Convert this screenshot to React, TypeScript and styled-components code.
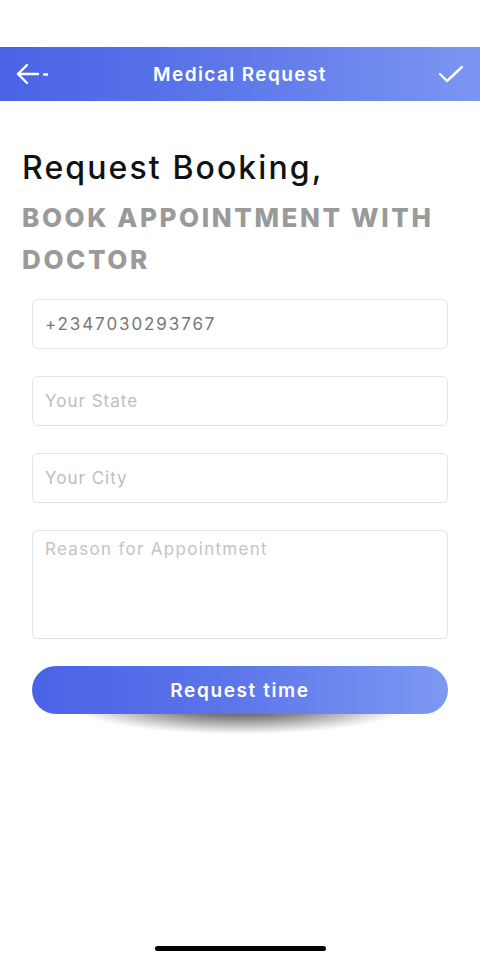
import React from "react";
import styled, { createGlobalStyle } from "styled-components";

const Global = createGlobalStyle`
  html, body { margin: 0; padding: 0; background: #fff; }
  body { font-family: "Inter", "Noto Sans", sans-serif; -webkit-font-smoothing: antialiased; }
  * { box-sizing: border-box; }
`;

const Screen = styled.div`
  width: 480px;
  height: 960px;
  display: flex;
  flex-direction: column;
  background: #fff;
  position: relative;
`;

const StatusSpace = styled.div`
  height: 47px;
`;

const Header = styled.header`
  height: 54px;
  display: flex;
  align-items: center;
  justify-content: space-between;
  padding: 0 16px 0 16px;
  background: linear-gradient(90deg, #4a63e6 0%, #5c76ea 45%, #7b96f1 100%);
  color: #fff;
`;

const IconBtn = styled.div<{ $end?: boolean }>`
  width: 36px;
  height: 36px;
  display: flex;
  align-items: center;
  justify-content: ${(p) => (p.$end ? "flex-end" : "flex-start")};
`;

const Title = styled.h1`
  margin: 0;
  font-size: 19px;
  font-weight: 600;
  letter-spacing: 1.4px;
`;

const Content = styled.main`
  display: flex;
  flex-direction: column;
  padding: 48px 0 0 0;
`;

const Heading = styled.h2`
  margin: 0 0 0 22px;
  font-size: 32px;
  font-weight: 500;
  color: #111;
  line-height: 38px;
  letter-spacing: 2.1px;
`;

const Sub = styled.h3`
  margin: 10px 30px 0 22px;
  font-size: 26px;
  font-weight: 800;
  color: #9a9a9a;
  line-height: 42px;
  letter-spacing: 2.6px;
  text-transform: uppercase;
`;

const Form = styled.form`
  display: flex;
  flex-direction: column;
  gap: 27px;
  padding: 18px 32px 0 32px;
`;

const Field = styled.input`
  height: 50px;
  border: 1px solid #e4e4e4;
  border-radius: 6px;
  padding: 0 12px;
  font-family: inherit;
  font-size: 17px;
  letter-spacing: 1px;
  color: #777;
  background: #fff;
  outline: none;
  &::placeholder { color: #bdbdbd; }
`;

const PhoneField = styled(Field)`
  letter-spacing: 1.9px;
`;

const Area = styled.textarea`
  height: 109px;
  border: 1px solid #e4e4e4;
  border-radius: 6px;
  padding: 8px 12px;
  font-family: inherit;
  font-size: 17px;
  letter-spacing: 1.3px;
  color: #777;
  resize: none;
  outline: none;
  &::placeholder { color: #c4c4c4; }
`;

const ButtonWrap = styled.div`
  position: relative;
  height: 48px;
  &::after {
    content: "";
    position: absolute;
    left: 40px;
    right: 40px;
    top: 38px;
    height: 30px;
    border-radius: 50%;
    background: radial-gradient(ellipse at 50% 0%, rgba(0,0,0,0.85) 0%, rgba(0,0,0,0.45) 35%, rgba(0,0,0,0.08) 65%, rgba(0,0,0,0) 72%);
    z-index: 0;
  }
`;

const Button = styled.button`
  position: relative;
  z-index: 1;
  width: 100%;
  height: 48px;
  border: none;
  border-radius: 24px;
  background: linear-gradient(90deg, #4a63e6 0%, #5a74ea 45%, #7d99f2 100%);
  color: #fff;
  font-family: inherit;
  font-size: 19px;
  font-weight: 600;
  letter-spacing: 1.6px;
`;

const HomeBar = styled.div`
  position: absolute;
  left: 155px;
  bottom: 9px;
  width: 171px;
  height: 5px;
  border-radius: 3px;
  background: #000;
`;

export default function App() {
  return (
    <>
      <Global />
      <Screen>
        <StatusSpace />
        <Header>
          <IconBtn>
            <svg width="36" height="24" viewBox="0 0 36 24" fill="none" stroke="#fff" strokeWidth="2.4" strokeLinecap="round" strokeLinejoin="round">
              <path d="M11 3 L2 12 L11 21" />
              <path d="M2 12 H22" />
              <path d="M27 12.5 H32" strokeLinecap="butt" />
            </svg>
          </IconBtn>
          <Title>Medical Request</Title>
          <IconBtn $end>
            <svg width="26" height="20" viewBox="0 0 26 20" fill="none" stroke="#fff" strokeWidth="2.4" strokeLinecap="round" strokeLinejoin="round">
              <path d="M2 10 L9 17 L24 3" />
            </svg>
          </IconBtn>
        </Header>
        <Content>
          <Heading>Request Booking,</Heading>
          <Sub>Book appointment with doctor</Sub>
          <Form onSubmit={(e) => e.preventDefault()}>
            <PhoneField defaultValue="+2347030293767" />
            <Field placeholder="Your State" />
            <Field placeholder="Your City" />
            <Area placeholder="Reason for Appointment" />
            <ButtonWrap>
              <Button type="button">Request time</Button>
            </ButtonWrap>
          </Form>
        </Content>
        <HomeBar />
      </Screen>
    </>
  );
}
